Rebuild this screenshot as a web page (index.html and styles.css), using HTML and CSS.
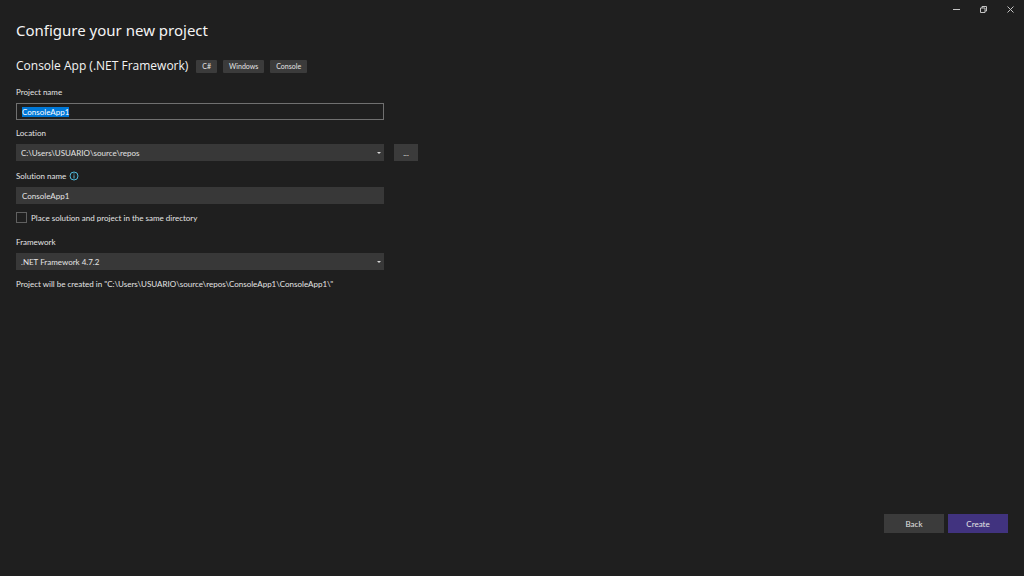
FILE: index.html
```html
<!DOCTYPE html>
<html lang="en">
<head>
    <meta charset="UTF-8">
    <meta name="viewport" content="width=device-width, initial-scale=1.0">
    <title>Configure your new project</title>
    <link rel="stylesheet" href="styles.css">
</head>
<body>

    <!-- Window Controls -->
    <header class="titlebar">
        <button type="button" aria-label="Minimize">
            <svg width="9" height="9" viewBox="0 0 9 9"><path d="M1 4.5h7"/></svg>
        </button>
        <button type="button" aria-label="Restore">
            <svg width="9" height="9" viewBox="0 0 9 9"><path d="M1.5 3h4.5v4.5h-4.5zM3 3v-1.5h4.5v4.5h-1.5"/></svg>
        </button>
        <button type="button" aria-label="Close">
            <svg width="9" height="9" viewBox="0 0 9 9"><path d="M1.5 1.5l6 6M7.5 1.5l-6 6"/></svg>
        </button>
    </header>

    <form class="wizard">
        <main>
            <h1>Configure your new project</h1>

            <div class="template">
                <h2>Console App (.NET Framework)</h2>
                <ul class="tags">
                    <li>C#</li>
                    <li>Windows</li>
                    <li>Console</li>
                </ul>
            </div>

            <div class="field">
                <label for="projectName">Project name</label>
                <input type="text" id="projectName" class="text-box outlined" value="ConsoleApp1" spellcheck="false">
            </div>

            <div class="field">
                <label for="location">Location</label>
                <div class="field-row">
                    <div class="select-box">
                        <select id="location">
                            <option>C:\Users\USUARIO\source\repos</option>
                        </select>
                        <svg width="4" height="2" viewBox="0 0 4 2"><path d="M0 0h4l-2 2z"/></svg>
                    </div>
                    <button type="button" class="browse" aria-label="Browse">...</button>
                </div>
            </div>

            <div class="field solution">
                <div class="label-row">
                    <label for="solutionName">Solution name</label>
                    <svg class="info" width="10" height="10" viewBox="0 0 10 10">
                        <circle cx="5" cy="5" r="4"/>
                        <path d="M5 4.3v3.2M5 2.4v1.1"/>
                    </svg>
                </div>
                <input type="text" id="solutionName" class="text-box" value="ConsoleApp1" spellcheck="false">
            </div>

            <div class="check">
                <input type="checkbox" id="sameDirectory">
                <label for="sameDirectory">Place solution and project in the same directory</label>
            </div>

            <div class="field framework">
                <label for="framework">Framework</label>
                <div class="select-box">
                    <select id="framework">
                        <option>.NET Framework 4.7.2</option>
                    </select>
                    <svg width="4" height="2" viewBox="0 0 4 2"><path d="M0 0h4l-2 2z"/></svg>
                </div>
            </div>

            <p class="summary">Project will be created in "C:\Users\USUARIO\source\repos\ConsoleApp1\ConsoleApp1\"</p>
        </main>

        <footer class="actions">
            <button type="button">Back</button>
            <button type="submit" class="primary">Create</button>
        </footer>
    </form>

    <script>
        // Start with the project name ready to be replaced
        document.getElementById('projectName').select();
    </script>
</body>
</html>
```
FILE: styles.css
```css
/* General Styles */
* {
    box-sizing: border-box;
}

body {
    margin: 0;
    min-height: 100vh;
    display: flex;
    flex-direction: column;
    background-color: #1f1f1f;
    color: #e4e4e4;
    font-family: Lato, "Open Sans", sans-serif;
    font-size: 8px;
    font-variant-ligatures: none;
    line-height: 12px;
}

h1, h2, p, ul {
    margin: 0;
    padding: 0;
}

button, input, select {
    margin: 0;
    border: none;
    border-radius: 0;
    color: inherit;
    font: inherit;
}

button {
    padding: 0;
    background-color: #3b3b3b;
}

/* Window Controls */
.titlebar {
    display: flex;
    justify-content: flex-end;
    height: 19px;
}

.titlebar button {
    display: flex;
    align-items: center;
    justify-content: center;
    width: 27px;
    background: none;
}

.titlebar svg {
    fill: none;
    stroke: #c4c4c4;
}

/* Page Layout */
.wizard {
    flex: 1;
    display: flex;
    flex-direction: column;
    justify-content: space-between;
    padding: 0 16px 43px;
}

h1,
h2 {
    font-weight: 400;
    color: #f4f4f4;
}

h1 {
    font-family: "Noto Sans", "Open Sans", sans-serif;
    font-size: 15px;
    line-height: 22px;
}

/* Template Name and Tags */
.template {
    display: flex;
    align-items: center;
    gap: 8px;
    margin: 17px 0 12px;
}

h2 {
    font-family: "Open Sans", "Noto Sans", sans-serif;
    font-size: 12px;
    line-height: 16px;
}

.tags {
    display: flex;
    gap: 6px;
    list-style: none;
}

.tags li {
    padding: 0 6px;
    border-radius: 1px;
    background-color: #3b3b3b;
    font-size: 7px;
    line-height: 13px;
}

/* Form Fields */
.field {
    display: flex;
    flex-direction: column;
    gap: 5px;
    margin-bottom: 7px;
}

.text-box,
.select-box {
    width: 100%;
    max-width: 368px;
    height: 17px;
    background-color: #383838;
}

.text-box {
    padding: 0 6px;
}

.text-box.outlined {
    padding: 0 5px;
    border: 1px solid #707070;
    background-color: #1f1f1f;
}

.text-box:focus {
    outline: none;
}

.text-box::selection {
    background-color: #0078d7;
    color: #fff;
}

.field-row {
    display: flex;
    gap: 10px;
}

.select-box {
    position: relative;
}

.select-box select {
    appearance: none;
    width: 100%;
    height: 100%;
    padding: 0 16px 0 5px;
    background: none;
}

.select-box svg {
    position: absolute;
    top: 8px;
    right: 3px;
    fill: #d8d8d8;
    pointer-events: none;
}

.browse {
    width: 24px;
}

.solution {
    margin: 9px 0 8px;
}

.label-row {
    display: flex;
    align-items: center;
    gap: 3px;
}

.info {
    fill: none;
    stroke: #4fb8d8;
}

/* Checkbox */
.check {
    display: flex;
    align-items: flex-start;
    gap: 4px;
}

.check input {
    appearance: none;
    width: 11px;
    height: 11px;
    border: 1px solid #606060;
}

.check input:checked {
    background-color: #0078d7;
}

.framework {
    margin: 12px 0 8px;
}

/* Bottom Buttons */
.actions {
    display: flex;
    justify-content: flex-end;
    gap: 4px;
}

.actions button {
    width: 60px;
    height: 19px;
}

.actions .primary {
    background-color: #41337f;
}
```
